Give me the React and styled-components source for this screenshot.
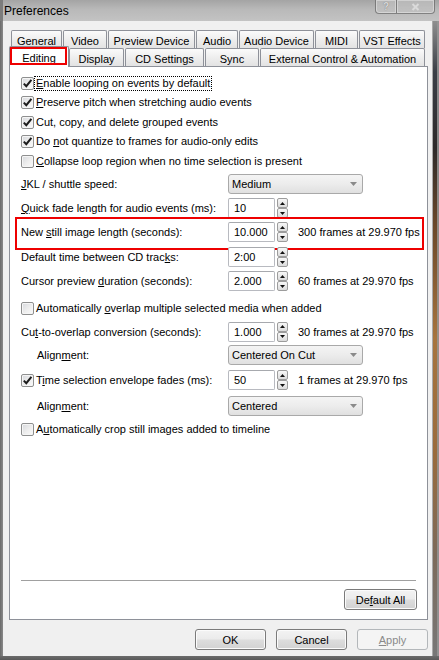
import React from 'react'
import styled, { createGlobalStyle, css } from 'styled-components'

const GlobalStyle = createGlobalStyle`
    html, body {
        margin: 0;
        padding: 0;
        background: #7a7a7a;
    }
    body {
        font-family: "Liberation Sans", Arial, sans-serif;
        font-size: 11px;
        color: #000;
    }
    * {
        box-sizing: border-box;
    }
    u {
        text-underline-offset: 1px;
    }
`

const Window = styled.div`
    width: 439px;
    height: 660px;
    display: flex;
    flex-direction: column;
    overflow: hidden;
    background: #8c8c8c;
`

const TitleBar = styled.div`
    height: 21px;
    flex: none;
    display: flex;
    align-items: flex-start;
    background: linear-gradient(to bottom, #a4a4a4 0%, #b9b9b9 45%, #c3c3c3 100%);
    border-left: 3px solid #7c7c7c;
`

const Title = styled.div`
    font-size: 12px;
    line-height: 14px;
    padding: 4px 0 0 1px;
    color: #000;
`

const CaptionButtons = styled.div`
    display: flex;
    margin-left: auto;
    margin-right: 4px;
`

const CaptionButton = styled.div`
    width: ${props => props.$w}px;
    height: 14px;
    display: flex;
    align-items: center;
    justify-content: center;
    border: 1px solid rgba(70, 70, 70, 0.55);
    border-top: none;
    box-shadow: inset 0 0 0 1px rgba(255, 255, 255, 0.35);
    background: linear-gradient(to bottom, rgba(255, 255, 255, 0.22), rgba(255, 255, 255, 0.05));
    color: #d9d9d9;
    font-weight: bold;
    font-size: 10px;
    text-shadow: 0 0 1px #666;
    border-radius: ${props => (props.$first ? '0 0 0 4px' : props.$last ? '0 0 4px 0' : '0')};
    & + & {
        border-left: none;
    }
`

const Frame = styled.div`
    flex: 1;
    display: flex;
`

const LeftEdge = styled.div`
    width: 3px;
    flex: none;
    background: linear-gradient(to right, #6a6a6a, #8a8a8a);
`

const RightEdge = styled.div`
    width: 7px;
    flex: none;
    border-left: 1px solid #a8a8a8;
    background:
        linear-gradient(to right, transparent 0, transparent 4px, rgba(150, 150, 150, 0.85) 4px),
        linear-gradient(to bottom, #8f8f8f 0%, #3a3e46 8%, #2d2a2a 20%, #6a4729 32%, #a7743e 50%, #9a6b3c 68%, #7d6a5a 84%, #777 100%);
`

const BottomEdge = styled.div`
    height: 4px;
    flex: none;
    background: linear-gradient(to bottom, #6c6c6c, #5a5a5a);
`

const Client = styled.div`
    flex: 1;
    display: flex;
    flex-direction: column;
    background: #f0f0f0;
    padding: 9px 4px 6px 6px;
`

const TabStrip = styled.div`
    margin-left: 2px;
    width: 415px;
    display: flex;
    flex-direction: column;
`

const TabRow = styled.div`
    display: flex;
    height: 18px;
    position: relative;
    z-index: ${props => props.$front ? 2 : 1};
`

const Tab = styled.div`
    width: ${props => props.$w - 1}px;
    margin-right: 1px;
    height: 18px;
    flex: none;
    display: flex;
    align-items: center;
    justify-content: center;
    padding-top: 2px;
    white-space: nowrap;
    border: 1px solid #8e9199;
    border-bottom: none;
    border-radius: 2px 2px 0 0;
    background: linear-gradient(to bottom, #fbfbfb 0%, #efefef 45%, #e3e3e3 100%);
    ${props => props.$active && css`
        position: relative;
        width: ${props.$w + 2}px;
        height: 21px;
        margin: -2px 0 -1px -2px;
        padding-top: 1px;
        background: #fff;
        z-index: 3;
        &::after {
            content: '';
            position: absolute;
            top: 0;
            left: 0;
            right: 1px;
            bottom: 2px;
            border: 2px solid #ee0000;
        }
    `}
`

const Panel = styled.div`
    width: 419px;
    height: 554px;
    flex: none;
    border: 1px solid #8e9199;
    background: #fff;
    display: flex;
    flex-direction: column;
    padding: 6px 11px 9px 11px;
`

const Row = styled.div`
    height: ${props => props.$h}px;
    margin-top: ${props => props.$mt || 0}px;
    display: flex;
    align-items: center;
    flex: none;
    position: relative;
    white-space: nowrap;
    ${props => props.$highlight && css`
        &::after {
            content: '';
            position: absolute;
            top: -3px;
            bottom: -6px;
            left: -6px;
            right: -8px;
            border: 2px solid #ee0000;
            pointer-events: none;
        }
    `}
`

const LabelCell = styled.div`
    width: 207px;
    flex: none;
    padding-left: ${props => props.$indent || 0}px;
`

const CheckWrap = styled.div`
    display: flex;
    align-items: center;
`

const Box = styled.span`
    width: 13px;
    height: 13px;
    flex: none;
    border: 1px solid #8e8f8f;
    border-radius: 2px;
    background: linear-gradient(135deg, #d6d8dc 0%, #eeeeee 55%, #fafafa 100%);
    box-shadow: inset 0 0 0 1px #f5f5f5;
    display: flex;
    align-items: center;
    justify-content: center;
`

const CheckText = styled.span`
    line-height: 13px;
    padding: 0 1px;
    border: 1px dotted ${props => (props.$focus ? '#000' : 'transparent')};
`

const Combo = styled.div`
    width: 135px;
    height: 20px;
    flex: none;
    display: flex;
    align-items: center;
    justify-content: space-between;
    padding: 0 5px 0 3px;
    border: 1px solid #a9a9a9;
    border-radius: 3px;
    background: linear-gradient(to bottom, #f4f4f4 0%, #ececec 50%, #e0e0e0 100%);
`

const TextBox = styled.div`
    width: 47px;
    height: 20px;
    flex: none;
    display: flex;
    align-items: center;
    padding-left: 5px;
    border: 1px solid #b8bac0;
    border-top-color: #a7a9ae;
    border-radius: 2px;
    background: #fff;
`

const SpinButtons = styled.div`
    width: 11px;
    height: 20px;
    margin-left: 2px;
    flex: none;
    display: flex;
    flex-direction: column;
`

const SpinHalf = styled.div`
    flex: 1;
    display: flex;
    align-items: center;
    justify-content: center;
    border: 1px solid #9c9c9c;
    border-radius: 2px;
    background: linear-gradient(to bottom, #f7f7f7, #dcdcdc);
`

const FramesText = styled.span`
    margin-left: 10px;
`

const Spacer = styled.div`
    flex: 1;
`

const Separator = styled.div`
    height: 1px;
    flex: none;
    background: #a0a0a0;
    margin-bottom: 8px;
`

const FooterRow = styled.div`
    display: flex;
    justify-content: flex-end;
    margin-right: -1px;
`

const Button = styled.div`
    width: ${props => props.$w || 71}px;
    height: ${props => props.$h || 21}px;
    flex: none;
    display: flex;
    align-items: center;
    justify-content: center;
    border: 1px solid #7a7a7a;
    border-radius: 3px;
    background: linear-gradient(to bottom, #f3f3f3 0%, #ebebeb 48%, #dddddd 52%, #d2d2d2 100%);
    box-shadow: inset 0 0 0 1px #fbfbfb;
    color: #000;
    ${props => props.$disabled && css`
        border-color: #b3b7ba;
        background: #f4f4f4;
        box-shadow: none;
        color: #8a8a8a;
    `}
`

const DialogButtons = styled.div`
    display: flex;
    justify-content: flex-end;
    gap: 10px;
    margin-top: 9px;
`

const CheckMark = () => (
    <svg width="11" height="11" viewBox="0 0 11 11">
        <path d="M1.8 5.6 L4.3 8.2 L9.4 1.8" fill="none" stroke="#1c1c1c" strokeWidth="2" />
    </svg>
)

const CloseGlyph = () => (
    <svg width="9" height="8" viewBox="0 0 9 8">
        <path d="M1.5 1 L7.5 7 M7.5 1 L1.5 7" stroke="#dadada" strokeWidth="2" />
    </svg>
)

const ArrowDown = ({ color = '#8a8a8a' }) => (
    <svg width="7" height="4" viewBox="0 0 7 4">
        <path d="M0 0 H7 L3.5 4 Z" fill={color} />
    </svg>
)

const ArrowUp = () => (
    <svg width="5" height="3" viewBox="0 0 5 3">
        <path d="M0 3 H5 L2.5 0 Z" fill="#111" />
    </svg>
)

const CheckBox = ({ checked, focus, children }) => (
    <CheckWrap>
        <Box>{checked && <CheckMark />}</Box>
        <CheckText $focus={focus}>{children}</CheckText>
    </CheckWrap>
)

const SpinEdit = ({ value }) => (
    <>
        <TextBox>{value}</TextBox>
        <SpinButtons>
            <SpinHalf><ArrowUp /></SpinHalf>
            <SpinHalf>
                <svg width="5" height="3" viewBox="0 0 5 3">
                    <path d="M0 0 H5 L2.5 3 Z" fill="#111" />
                </svg>
            </SpinHalf>
        </SpinButtons>
    </>
)

const ComboBox = ({ value }) => (
    <Combo>
        <span>{value}</span>
        <ArrowDown />
    </Combo>
)

const backTabs = [
    ['General', 52], ['Video', 45], ['Preview Device', 88], ['Audio', 43],
    ['Audio Device', 76], ['MIDI', 44], ['VST Effects', 67],
]

const frontTabs = [
    ['Editing', 58, true], ['Display', 56], ['CD Settings', 80], ['Sync', 55],
    ['External Control & Automation', 166],
]

const App = () => (
    <>
        <GlobalStyle />
        <Window>
            <TitleBar>
                <Title>Preferences</Title>
                <CaptionButtons>
                    <CaptionButton $w={22} $first>?</CaptionButton>
                    <CaptionButton $w={38} $last><CloseGlyph /></CaptionButton>
                </CaptionButtons>
            </TitleBar>
            <Frame>
                <LeftEdge />
                <Client>
                    <TabStrip>
                        <TabRow>
                            {backTabs.map(([name, w]) => <Tab key={name} $w={w}>{name}</Tab>)}
                        </TabRow>
                        <TabRow $front>
                            {frontTabs.map(([name, w, active]) => (
                                <Tab key={name} $w={w} $active={active}>{name}</Tab>
                            ))}
                        </TabRow>
                    </TabStrip>
                    <Panel>
                        <Row $h={20}>
                            <CheckBox checked focus><u>E</u>nable looping on events by default</CheckBox>
                        </Row>
                        <Row $h={19}>
                            <CheckBox checked><u>P</u>reserve pitch when stretching audio events</CheckBox>
                        </Row>
                        <Row $h={20}>
                            <CheckBox checked>Cut, copy, and delete <u>g</u>rouped events</CheckBox>
                        </Row>
                        <Row $h={19}>
                            <CheckBox checked>Do <u>n</u>ot quantize to frames for audio-only edits</CheckBox>
                        </Row>
                        <Row $h={21}>
                            <CheckBox><u>C</u>ollapse loop region when no time selection is present</CheckBox>
                        </Row>
                        <Row $h={24}>
                            <LabelCell><u>J</u>KL / shuttle speed:</LabelCell>
                            <ComboBox value="Medium" />
                        </Row>
                        <Row $h={24}>
                            <LabelCell><u>Q</u>uick fade length for audio events (ms):</LabelCell>
                            <SpinEdit value="10" />
                        </Row>
                        <Row $h={24} $highlight>
                            <LabelCell>New <u>s</u>till image length (seconds):</LabelCell>
                            <SpinEdit value="10.000" />
                            <FramesText>300 frames at 29.970 fps</FramesText>
                        </Row>
                        <Row $h={24} $mt={1}>
                            <LabelCell>Default time between CD trac<u>k</u>s:</LabelCell>
                            <SpinEdit value="2:00" />
                        </Row>
                        <Row $h={24}>
                            <LabelCell>Cursor preview <u>d</u>uration (seconds):</LabelCell>
                            <SpinEdit value="2.000" />
                            <FramesText>60 frames at 29.970 fps</FramesText>
                        </Row>
                        <Row $h={23} $mt={4}>
                            <CheckBox>Automatically <u>o</u>verlap multiple selected media when added</CheckBox>
                        </Row>
                        <Row $h={23}>
                            <LabelCell>Cu<u>t</u>-to-overlap conversion (seconds):</LabelCell>
                            <SpinEdit value="1.000" />
                            <FramesText>30 frames at 29.970 fps</FramesText>
                        </Row>
                        <Row $h={24}>
                            <LabelCell $indent={16}>Align<u>m</u>ent:</LabelCell>
                            <ComboBox value="Centered On Cut" />
                        </Row>
                        <Row $h={24} $mt={1}>
                            <LabelCell>
                                <CheckBox checked>T<u>i</u>me selection envelope fades (ms):</CheckBox>
                            </LabelCell>
                            <SpinEdit value="50" />
                            <FramesText>1 frames at 29.970 fps</FramesText>
                        </Row>
                        <Row $h={24} $mt={2}>
                            <LabelCell $indent={16}>Align<u>m</u>ent:</LabelCell>
                            <ComboBox value="Centered" />
                        </Row>
                        <Row $h={20} $mt={1}>
                            <CheckBox>A<u>u</u>tomatically crop still images added to timeline</CheckBox>
                        </Row>
                        <Spacer />
                        <Separator />
                        <FooterRow>
                            <Button $w={73}>De<u>f</u>ault All</Button>
                        </FooterRow>
                    </Panel>
                    <DialogButtons>
                        <Button>OK</Button>
                        <Button>Cancel</Button>
                        <Button $disabled><u>A</u>pply</Button>
                    </DialogButtons>
                </Client>
                <RightEdge />
            </Frame>
            <BottomEdge />
        </Window>
    </>
)

export default App
